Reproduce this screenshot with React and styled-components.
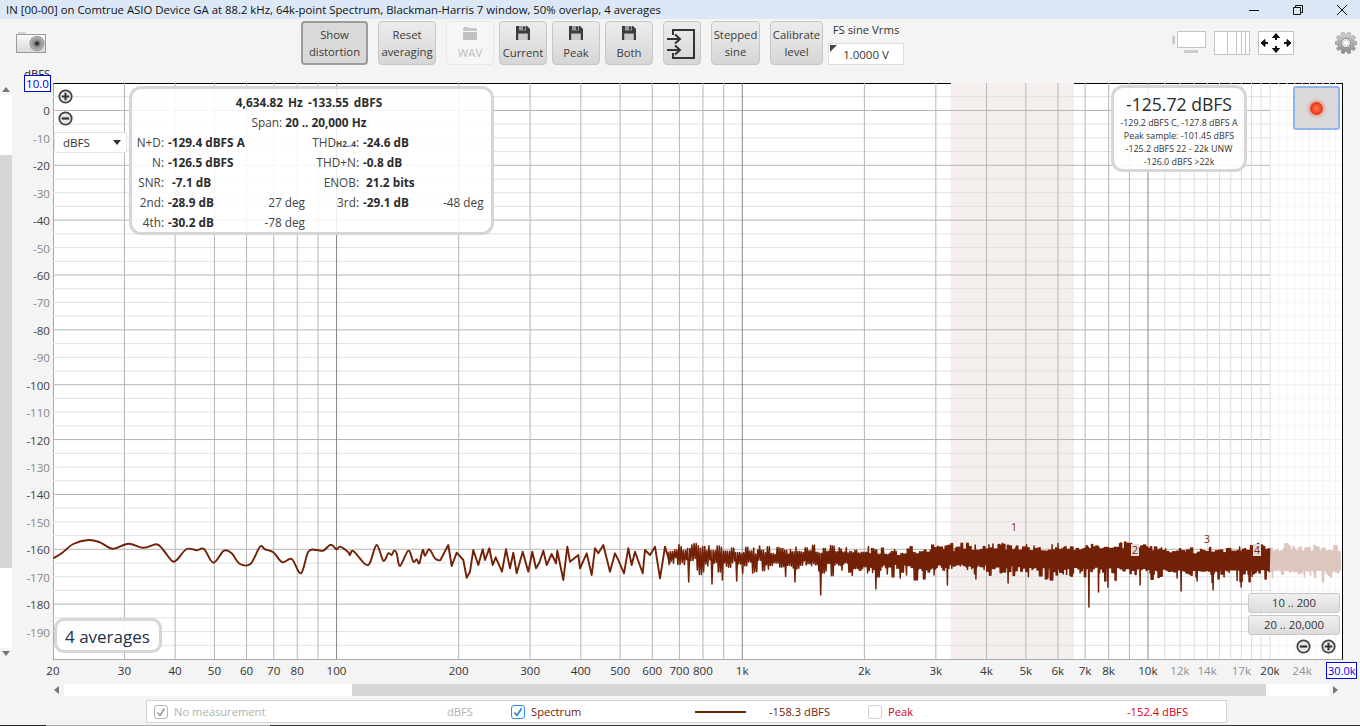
import React from "react";
import styled, { createGlobalStyle } from "styled-components";

const FONT = `"Open Sans", "Noto Sans", "Liberation Sans", sans-serif`;

const Global = createGlobalStyle`
  html, body { margin: 0; padding: 0; width: 1360px; height: 726px; overflow: hidden; background: #f4f4f4; }
  body { font-family: ${FONT}; font-size: 12px; color: #333; }
  * { box-sizing: border-box; }
`;

const Page = styled.div`
  width: 1360px; height: 726px; display: flex; flex-direction: column; overflow: hidden; background: #f4f4f4;
`;

/* ---------- title bar ---------- */
const TitleBar = styled.div`
  height: 19px; flex: none; background: #dce8f6; display: flex; align-items: center; justify-content: space-between;
  padding: 0 13px 0 6px; color: #111; font-size: 11.36px; white-space: nowrap;
`;
const WindowButtons = styled.div`display: flex; gap: 34px; align-items: center;`;
const WinIcon = styled.svg`width: 10px; height: 10px; display: block; fill: none; stroke: #111; stroke-width: 1;`;

/* ---------- toolbar ---------- */
const Toolbar = styled.div`height: 64px; flex: none; display: flex; align-items: flex-start; padding: 2px 3px 0 16px;`;
const Cam = styled.svg`width: 31px; height: 22px; margin-top: 11px; margin-right: 254px; flex: none;`;
const ToolButton = styled.div`
  width: ${p => p.$w}px; height: 44px; margin-left: ${p => p.$ml}px; flex: none; padding-top: 1px;
  border-radius: 4px; display: flex; flex-direction: column; align-items: center; justify-content: center;
  font-size: 11.3px; line-height: 16.5px; text-align: center; color: ${p => (p.$off ? "#bdbdbd" : "#3a3a3a")};
  border: 1px solid ${p => (p.$off ? "#e6e6e6" : "#c6c6c6")};
  background: ${p => (p.$off ? "#f6f6f6" : "linear-gradient(#ececec, #d6d6d6)")};
  ${p => p.$pressed && "background: #d9d9d9; border: 2px solid #9c9c9c;"}
`;
const BtnIcon = styled.svg`width: 16px; height: 16px; display: block; margin-bottom: 4px;`;
const FsBlock = styled.div`width: 76px; margin-left: 5px; flex: none; display: flex; flex-direction: column; align-items: center;`;
const FsLabel = styled.div`height: 22px; line-height: 18px; font-size: 11.3px; color: #333; white-space: nowrap;`;
const FsInput = styled.div`
  position: relative; width: 76px; height: 22px; background: #fff; border: 1px solid #ddd; line-height: 21px; text-align: center; font-size: 11.5px; color: #333;
  &::before { content: ""; position: absolute; left: 1px; top: 1px; border-style: solid; border-width: 7px 7px 0 0; border-color: #444 transparent transparent transparent; }
`;
const ViewIcon = styled.svg`width: ${p => p.$w}px; height: 26px; margin-left: ${p => p.$ml}px; margin-top: 10px; flex: none;`;
const GearIcon = styled.svg`width: 22px; height: 22px; margin-left: 41px; margin-top: 11px; flex: none;`;

/* ---------- main ---------- */
const Main = styled.div`height: 576px; flex: none; display: flex;`;
const VScroll = styled.div`width: 12px; flex: none; display: flex; flex-direction: column; align-items: center;`;
const ArrowBox = styled.div`
  flex: none; height: ${p => p.$h}px; display: flex; align-items: center; justify-content: center; width: 12px;
  &::before { content: ""; border-style: solid; border-color: transparent;
    ${p => (p.$up ? "border-width: 0 4px 5px 4px; border-bottom-color: #777;" : "border-width: 5px 4px 0 4px; border-top-color: #777;")} }
`;
const Track = styled.div`width: 12px; flex: none; height: ${p => p.$h}px; background: ${p => (p.$thumb ? "#d6d6d6" : "#fff")};`;
const YAxis = styled.div`width: 41px; flex: none; margin-top: -15px; display: flex; flex-direction: column; align-items: flex-end; padding-right: 3px; height: 591px;`;
const YUnit = styled.div`height: 7px; width: 26px; text-align: center; line-height: 12px; font-size: 11.3px; color: #222; white-space: nowrap;`;
const BlueBox = styled.div`
  background: #fff; border: 1px solid #0000e6; color: #0000e6; text-align: center; font-size: 11.6px; flex: none; white-space: nowrap;
`;
const YTop = styled(BlueBox)`width: 27px; height: 17px; line-height: 15px; margin-bottom: 5.1px; margin-right: -1px;`;
const YTick = styled.div`
  height: 27.45px; flex: none; display: flex; align-items: center; font-size: 11.6px; color: ${p => (p.$major ? "#444" : "#888")};
`;
const Plot = styled.div`
  position: relative; width: 1290px; height: 577px; flex: none; background: #fff;
  border-top: 1px solid #000; border-right: 1px solid #000; border-left: 1px solid #aaa; border-bottom: 1px solid #aaa;
`;
const ChartSvg = styled.svg`position: absolute; left: -1px; top: -1px; width: 1289px; height: 576px; display: block;`;

const Panel = styled.div`
  position: absolute; background: rgba(255,255,255,.86); border: 3px solid #d6d6d6; border-radius: 12px;
`;
const InfoPanel = styled(Panel)`
  left: 75px; top: 2px; width: 365px; height: 149px; padding: 3px 0 0 0;
  display: grid; grid-template-columns: 32px 94px 47px 54px 84px 40px; grid-auto-rows: 20px; align-items: center; font-size: 11.8px; color: #444; white-space: nowrap;
`;
const InfoHead = styled.div`grid-column: 1 / -1; text-align: center; padding-left: 3px; word-spacing: ${p => p.$ws || 0}px;`;
const B = styled.b`color: #2c2c2c; font-weight: 700;`;
const InfoLabel = styled.div`text-align: right;`;
const Sub = styled.span`font-size: 8px; font-weight: 700;`;
const InfoValue = styled.div`padding-left: ${p => p.$indent || 4}px; font-weight: 700; color: #2c2c2c;`;
const InfoPhase = styled.div`text-align: right;`;
const LevelPanel = styled(Panel)`
  left: 1057px; top: 1px; width: 136px; height: 87px; text-align: center; color: #333; font-size: 8.9px; line-height: 13px; padding-top: 4px; white-space: nowrap;
`;
const LevelBig = styled.div`font-size: 17.6px; line-height: 24px; color: #2a2a2a;`;
const RecordButton = styled.div`
  position: absolute; left: 1239px; top: 2px; width: 47px; height: 44px; background: #dadada; border: 2px solid #8fb4ea; border-radius: 3px;
  display: flex; align-items: center; justify-content: center;
`;
const RecordDot = styled.div`
  width: 13px; height: 13px; border-radius: 50%; background: radial-gradient(circle at 50% 50%, #ff7a5c, #f0401c 55%, #a82208);
  box-shadow: 0 0 3px 2px rgba(240,90,60,.4);
`;
const ZoomStack = styled.div`position: absolute; left: 4px; top: 5px; display: flex; flex-direction: column; gap: 7px;`;
const ZoomRow = styled.div`position: absolute; left: 1242px; top: 555px; display: flex; gap: 10px;`;
const ZoomIcon = styled.svg`width: 15px; height: 15px; display: block;`;
const UnitSelect = styled.div`
  position: absolute; left: 0; top: 48px; width: 73px; height: 21px; background: #fff; border: 1px solid #e2e2e2; border-radius: 2px;
  display: flex; align-items: center; justify-content: space-between; padding: 0 5px 0 8px; font-size: 11.6px; color: #333;
  &::after { content: ""; border-style: solid; border-width: 5px 4px 0 4px; border-color: #333 transparent transparent transparent; }
`;
const AvgPanel = styled(Panel)`
  left: 0; top: 534px; width: 108px; height: 35px; border-radius: 10px; font-size: 17px; line-height: 31px; padding-left: 8px; color: #22304a; white-space: nowrap;
`;
const RangeStack = styled.div`position: absolute; left: 1194px; top: 509px; display: flex; flex-direction: column; gap: 2px;`;
const RangeButton = styled.div`
  width: 92px; height: 20px; border: 1px solid #c8c8c8; border-radius: 3px; background: linear-gradient(#f0f0f0, #dcdcdc); text-align: center; line-height: 18px; font-size: 11.3px; color: #333;
`;
const Marker = styled.div`
  position: absolute; font-size: 10.5px; line-height: 12px; color: #7a2a14; padding: 0 1px;
  ${p => p.$bg && "background: #e2dcd8;"}
`;

/* ---------- x axis ---------- */
const XAxis = styled.div`height: 25px; flex: none; padding: 3px 0 0 53px; display: flex; font-size: 11.6px;`;
const XCell = styled.div`flex: none; height: 18px; line-height: 18px; white-space: nowrap;`;
const XText = styled.span`display: inline-block; transform: translateX(-50%); color: ${p => (p.$dim ? "#909090" : "#333")};`;
const XEnd = styled(BlueBox)`width: 31px; height: 17px; line-height: 15px; transform: translateX(-15px); font-size: 11px;`;

const HScroll = styled.div`height: 12px; flex: none; display: flex; align-items: center; padding-left: 54px;`;
const HArrow = styled.div`
  width: 10px; flex: none; display: flex; justify-content: ${p => (p.$left ? "flex-start" : "center")}; 
  &::before { content: ""; border-style: solid; border-color: transparent;
    ${p => (p.$left ? "border-width: 4px 5px 4px 0; border-right-color: #777;" : "border-width: 4px 0 4px 5px; border-left-color: #777;")} }
`;
const HTrack = styled.div`height: 12px; flex: none; width: ${p => p.$w}px; background: ${p => (p.$thumb ? "#d6d6d6" : "#fff")};`;

/* ---------- legend ---------- */
const Legend = styled.div`
  height: 23px; width: 1081px; flex: none; margin: 4px 0 0 146px; border: 1px solid #d2d2d2; background: #fff;
  display: flex; align-items: center; padding-left: 7px; font-size: 11.2px; white-space: nowrap;
`;
const LegendText = styled.div`width: ${p => p.$w}px; flex: none; color: ${p => p.$c}; padding-left: ${p => p.$pl || 0}px;`;
const Check = styled.div`
  width: 14px; height: 14px; flex: none; border-radius: 3px; background: #fff; margin-right: 6px;
  border: 1px solid ${p => p.$c}; display: flex; align-items: center; justify-content: center;
`;
const CheckMark = styled.svg`width: 10px; height: 10px; display: block; fill: none; stroke: ${p => p.$c}; stroke-width: 1.6;`;
const LegendLine = styled.div`width: 51px; height: 2px; flex: none; background: #722107;`;
const BottomEdge = styled.div`
  height: 1px; flex: none; margin-top: 2px; background: linear-gradient(90deg, #222 0 46px, #aaa 46px 270px, #333 270px);
`;

/* ---------- helpers ---------- */
const xOf = f => 53 + Math.log10(f / 20) * 405.7;
const yOf = db => 83 + (10 - db) * 2.7429;

function rng(seed) {
  let a = seed;
  return () => {
    a |= 0; a = (a + 0x6d2b79f5) | 0;
    let t = Math.imul(a ^ (a >>> 15), 1 | a);
    t = (t + Math.imul(t ^ (t >>> 7), 61 | t)) ^ t;
    return ((t ^ (t >>> 14)) >>> 0) / 4294967296;
  };
}

const lowA = [[160,115],[185,100],[220,72],[265,60],[300,67],[338,86],[385,71],[430,83],[470,73],[490,90],[515,122],[530,120],[560,87],[590,91],[612,87],[640,128],[672,92],[695,100],[720,132],[752,131],[780,80],[795,88],[820,97],[847,127],[875,117],[903,160],[925,95],[950,90],[970,92],[992,74],[1010,88],[1020,80],[1045,97],[1050,105],[1060,93],[1095,132],[1110,128],[1130,75],[1150,122],[1165,100],[1175,105],[1182,92],[1190,100],[1200,138],[1225,92],[1240,125],[1250,118],[1258,130],[1268,90],[1275,107],[1288,88],[1305,115],[1320,122]]
  .map(([x, y]) => [x / 3, 520 + y / 3]);
const lowB = [[355,45],[365,108],[380,68],[400,90],[410,143],[420,125],[430,60],[445,105],[458,58],[465,90],[478,55],[488,105],[497,82],[516,125],[528,58],[540,115],[550,68],[560,130],[578,65],[595,125],[607,65],[618,115],[628,98],[640,62],[650,105],[665,72],[678,100],[682,62],[700,150],[712,50],[720,95],[745,75],[750,115],[770,70],[785,135],[795,55],[805,70],[820,45],[840,125],[855,70],[865,90],[882,130],[895,55],[905,105],[915,65],[938,130],[945,60],[960,75],[975,50],[990,145],[1005,50],[1020,100]]
  .map(([x, y]) => [330 + x / 3, 530 + y / 3]);

function smooth(pts) {
  let d = `M${pts[0][0].toFixed(1)} ${pts[0][1].toFixed(1)}`;
  for (let i = 0; i < pts.length - 1; i++) {
    const p0 = pts[Math.max(0, i - 1)], p1 = pts[i], p2 = pts[i + 1], p3 = pts[Math.min(pts.length - 1, i + 2)];
    const c1 = [p1[0] + (p2[0] - p0[0]) / 6, p1[1] + (p2[1] - p0[1]) / 6];
    const c2 = [p2[0] - (p3[0] - p1[0]) / 6, p2[1] - (p3[1] - p1[1]) / 6];
    d += `C${c1[0].toFixed(1)} ${c1[1].toFixed(1)} ${c2[0].toFixed(1)} ${c2[1].toFixed(1)} ${p2[0].toFixed(1)} ${p2[1].toFixed(1)}`;
  }
  return d;
}
const poly = pts => pts.map(([x, y], i) => `${i ? "L" : "M"}${x.toFixed(1)} ${y.toFixed(1)}`).join("");

const spikes = [[688,582],[713,584],[722,580],[737,581],[795,582],[821,595],[876,589],[900,578],[948,585],[976,579],[1008,583],[1089,607],[1098,592],[1181,591],[1140,585],[1108,587],[1213,590],[1241,587]];

function band(from, to, seed, opts = {}) {
  const r = rng(seed);
  let d = "";
  let x = from;
  let up = true;
  let top = 552, bot = 562, nextTop = from, nextBot = from;
  while (x < to) {
    const t = Math.min(1, (x - 670) / 450);
    const step = opts.step || 1.1 - t * 0.6;
    const wander = Math.sin(x / 23) * 1.4 + Math.sin(x / 61) * 1.2;
    const centerTop = 552 - 2.5 * t + wander;
    const centerBot = 565 + 5 * t + wander * 0.6;
    if (x >= nextTop) {
      const q = r();
      top = centerTop - q * q * 7 + r() * 2.5;
      nextTop = x + 1 + r() * 2.5;
    }
    if (x >= nextBot) {
      const q = r();
      bot = centerBot - r() * 7 * (1.2 - t) + q * q * q * 13;
      nextBot = x + 0.8 + r() * 2;
    }
    let y = up ? top : bot;
    if (!up) {
      const sp = spikes.find(s => Math.abs(s[0] - x) <= step);
      if (sp && !opts.noSpikes) y = sp[1];
    }
    d += `${d ? "L" : "M"}${x.toFixed(1)} ${y.toFixed(1)}`;
    up = !up;
    x += step;
  }
  return d;
}

const DECADE_DARK = [100, 1000, 10000];
const MEDIUM = [30,40,50,60,70,80,90,200,300,400,500,600,700,800,900,2000,3000,4000,5000,6000,7000,8000,9000];
const LIGHT = [11,12,13,14,15,16,17,18,19,20].map(k => k * 1000);
const FAINT = [21,22,23,24,25,26,27,28,29].map(k => k * 1000);

function Chart() {
  const hLines = [];
  for (let db = 5; db >= -195; db -= 5) hLines.push(db);
  const x20k = xOf(20000);
  const lowBJoined = [lowA[lowA.length - 1], ...lowB];
  return (
    <ChartSvg viewBox="53 83 1289 576">
      <rect x="951" y="83" width="123" height="576" fill="#f4efed" />
      {hLines.map(db => {
        const major = db % 20 === 0;
        return (
          <g key={db}>
            <line x1="53" x2={x20k} y1={yOf(db)} y2={yOf(db)} stroke={major ? "#b4b4b4" : "#e0e0e0"} strokeWidth="1" />
            <line x1={x20k} x2="1342" y1={yOf(db)} y2={yOf(db)} stroke={major ? "#eeeeee" : "#f4f4f4"} strokeWidth="1" />
          </g>
        );
      })}
      {FAINT.map(f => <line key={f} x1={xOf(f)} x2={xOf(f)} y1="83" y2="659" stroke="#f3f3f3" />)}
      {LIGHT.map(f => <line key={f} x1={xOf(f)} x2={xOf(f)} y1="83" y2="659" stroke="#dcdcdc" />)}
      {MEDIUM.map(f => <line key={f} x1={xOf(f)} x2={xOf(f)} y1="83" y2="659" stroke="#b6b6b6" />)}
      {DECADE_DARK.map(f => <line key={f} x1={xOf(f)} x2={xOf(f)} y1="83" y2="659" stroke="#868686" />)}
      <path d={band(1270, 1341, 77, { step: 0.5, noSpikes: true })} fill="none" stroke="#dcc6be" strokeWidth="1.5" strokeLinejoin="round" />
      <path d={smooth(lowA)} fill="none" stroke="#722107" strokeWidth="1.9" strokeLinejoin="round" />
      <path d={poly(lowBJoined)} fill="none" stroke="#722107" strokeWidth="1.9" strokeLinejoin="round" />
      <path d={band(668, 1270, 9)} fill="none" stroke="#722107" strokeWidth="1.5" strokeLinejoin="round" />
    </ChartSvg>
  );
}

const Floppy = () => (
  <BtnIcon viewBox="0 0 16 16">
    <path d="M1 1h11l3 3v11H1z" fill="#3c3c3c" />
    <rect x="4" y="1" width="7" height="4.500" fill="#9a9a9a" />
    <rect x="8" y="1.600" width="2" height="3.200" fill="#3c3c3c" />
    <rect x="3.200" y="8.500" width="9.600" height="6.500" fill="#c9c9c9" />
  </BtnIcon>
);
const Folder = () => (
  <BtnIcon viewBox="0 0 16 16">
    <path d="M1 4l1-2h4l1 1h7l1 1v2H1z" fill="#c8c8c8" />
    <rect x="1" y="7" width="14" height="8" fill="#c2c2c2" />
  </BtnIcon>
);
const ZoomPlus = () => (
  <ZoomIcon viewBox="0 0 15 15">
    <circle cx="7.500" cy="7.500" r="6.200" fill="#e8e8e8" stroke="#444" strokeWidth="1.800" />
    <path d="M3.800 7.500h7.400M7.500 3.800v7.400" stroke="#333" strokeWidth="2" />
  </ZoomIcon>
);
const ZoomMinus = () => (
  <ZoomIcon viewBox="0 0 15 15">
    <circle cx="7.500" cy="7.500" r="6.200" fill="#e8e8e8" stroke="#444" strokeWidth="1.800" />
    <path d="M3.800 7.500h7.400" stroke="#333" strokeWidth="2.200" />
  </ZoomIcon>
);

const XT = [
  [20,"20"],[30,"30"],[40,"40"],[50,"50"],[60,"60"],[70,"70"],[80,"80"],[100,"100"],[200,"200"],[300,"300"],[400,"400"],[500,"500"],[600,"600"],[700,"700"],[800,"800"],[1000,"1k"],[2000,"2k"],[3000,"3k"],[4000,"4k"],[5000,"5k"],[6000,"6k"],[7000,"7k"],[8000,"8k"],[10000,"10k"],[12000,"12k",1],[14000,"14k",1],[17000,"17k",1],[20000,"20k"],[24000,"24k",1],
];

const gearPath = (() => {
  let d = "";
  const n = 10;
  for (let i = 0; i < n; i++) {
    const a = (i / n) * Math.PI * 2;
    const w = (Math.PI / n) * 0.55;
    const pts = [[a - w * 1.3, 8.6], [a - w * 0.8, 11], [a + w * 0.8, 11], [a + w * 1.3, 8.6]];
    pts.forEach(([t, r], j) => {
      d += `${i === 0 && j === 0 ? "M" : "L"}${(11 + r * Math.cos(t)).toFixed(2)} ${(11 + r * Math.sin(t)).toFixed(2)}`;
    });
  }
  return d + "Z";
})();

export default function App() {
  const yTicks = [];
  for (let db = 0; db >= -190; db -= 10) yTicks.push(db);
  return (
    <Page>
      <Global />
      <TitleBar>
        <span>IN [00-00] on Comtrue ASIO Device GA at 88.2 kHz, 64k-point Spectrum, Blackman-Harris 7 window, 50% overlap, 4 averages</span>
        <WindowButtons>
          <WinIcon viewBox="0 0 10 10"><path d="M0 5.500h10" /></WinIcon>
          <WinIcon viewBox="0 0 10 10"><path d="M.5 2.500h7v7h-7zM2.500 2.500v-2h7v7h-2" /></WinIcon>
          <WinIcon viewBox="0 0 10 10"><path d="M0 0l10 10M10 0L0 10" /></WinIcon>
        </WindowButtons>
      </TitleBar>

      <Toolbar>
        <Cam viewBox="0 0 31 22">
          <defs>
            <linearGradient id="camBody" x1="0" y1="0" x2="0" y2="1">
              <stop offset="0" stopColor="#fbfbfb" /><stop offset="1" stopColor="#d8d8d8" />
            </linearGradient>
            <radialGradient id="camLens">
              <stop offset="0" stopColor="#222" /><stop offset=".22" stopColor="#444" /><stop offset=".4" stopColor="#8a8a8a" /><stop offset=".85" stopColor="#b0b0b0" /><stop offset="1" stopColor="#808080" />
            </radialGradient>
          </defs>
          <rect x="2" y="0" width="8" height="3" fill="#d4d4d4" />
          <rect x=".5" y="2.500" width="29" height="18" fill="url(#camBody)" stroke="#9a9a9a" />
          <circle cx="21" cy="11.500" r="7.500" fill="url(#camLens)" />
        </Cam>
        <ToolButton $w={67} $ml={0} $pressed><span>Show</span><span>distortion</span></ToolButton>
        <ToolButton $w={58} $ml={10}><span>Reset</span><span>averaging</span></ToolButton>
        <ToolButton $w={48} $ml={10} $off><Folder />WAV</ToolButton>
        <ToolButton $w={48} $ml={5}><Floppy />Current</ToolButton>
        <ToolButton $w={48} $ml={5}><Floppy />Peak</ToolButton>
        <ToolButton $w={48} $ml={5}><Floppy />Both</ToolButton>
        <ToolButton $w={38} $ml={10}>
          <svg width="30" height="32" viewBox="0 0 30 32" fill="none" stroke="#333" strokeWidth="2">
            <path d="M6 7V2h21v28H6v-5" />
            <path d="M0 11h12M8 6.500l5 4.500-5 4.500M0 22h12M8 17.500l5 4.500-5 4.500" />
          </svg>
        </ToolButton>
        <ToolButton $w={49} $ml={10}><span>Stepped</span><span>sine</span></ToolButton>
        <ToolButton $w={53} $ml={10}><span>Calibrate</span><span>level</span></ToolButton>
        <FsBlock>
          <FsLabel>FS sine Vrms</FsLabel>
          <FsInput>1.0000 V</FsInput>
        </FsBlock>
        <ViewIcon $w={35} $ml={268} viewBox="0 0 35 26">
          <rect x="0" y="5" width="3" height="8" fill="#ccc" />
          <rect x="5.500" y=".5" width="28" height="16" fill="#fff" stroke="#c4c4c4" />
          <rect x="12" y="19" width="14" height="3" fill="#ccc" />
        </ViewIcon>
        <ViewIcon $w={36} $ml={7} viewBox="0 0 36 26">
          <rect x=".5" y=".5" width="35" height="23" fill="#fff" stroke="#c4c4c4" />
          <path d="M13.500 0v24M22.500 0v24M27.500 0v24M31.500 0v24" stroke="#c4c4c4" />
        </ViewIcon>
        <ViewIcon $w={36} $ml={8} viewBox="0 0 36 26">
          <rect x=".5" y=".5" width="35" height="23" fill="#fff" stroke="#c4c4c4" />
          <path d="M18 3v6M18 15v6M3 12h7M26 12h7" stroke="#111" strokeWidth="2" />
          <path d="M14.500 6.500L18 2.500l3.500 4zM14.500 17.500l3.500 4 3.500-4zM7 8.500L3 12l4 3.500zM29 8.500l4 3.500-4 3.500z" fill="#111" stroke="#111" />
        </ViewIcon>
        <GearIcon viewBox="0 0 22 22">
          <defs>
            <linearGradient id="gearFill" x1="0" y1="0" x2="0" y2="1">
              <stop offset="0" stopColor="#d2d2d2" /><stop offset="1" stopColor="#8a8a8a" />
            </linearGradient>
          </defs>
          <path d={gearPath} fill="url(#gearFill)" stroke="#8a8a8a" strokeWidth=".5" />
          <circle cx="11" cy="11" r="4.600" fill="#f0f0f0" stroke="#8c8c8c" />
          <circle cx="11" cy="11" r="2.800" fill="#fafafa" stroke="#bdbdbd" strokeWidth=".6" />
        </GearIcon>
      </Toolbar>

      <Main>
        <VScroll>
          <ArrowBox $up $h={12} />
          <Track $h={60} />
          <Track $h={413} $thumb />
          <Track $h={80} />
          <ArrowBox $h={11} />
        </VScroll>
        <YAxis>
          <YUnit>dBFS</YUnit>
          <YTop>10.0</YTop>
          {yTicks.map(db => <YTick key={db} $major={db % 20 === 0}>{db}</YTick>)}
        </YAxis>
        <Plot>
          <Chart />
          <InfoPanel>
            <InfoHead $ws={2}><B>4,634.82 Hz -133.55 dBFS</B></InfoHead>
            <InfoHead>Span: <B>20 .. 20,000 Hz</B></InfoHead>
            <InfoLabel>N+D:</InfoLabel><InfoValue>-129.4 dBFS A</InfoValue><div /><InfoLabel>THD<Sub>H2..4</Sub>:</InfoLabel><InfoValue>-24.6 dB</InfoValue><div />
            <InfoLabel>N:</InfoLabel><InfoValue>-126.5 dBFS</InfoValue><div /><InfoLabel>THD+N:</InfoLabel><InfoValue>-0.8 dB</InfoValue><div />
            <InfoLabel>SNR:</InfoLabel><InfoValue $indent={8}>-7.1 dB</InfoValue><div /><InfoLabel>ENOB:</InfoLabel><InfoValue $indent={7}>21.2 bits</InfoValue><div />
            <InfoLabel>2nd:</InfoLabel><InfoValue>-28.9 dB</InfoValue><InfoPhase>27 deg</InfoPhase><InfoLabel>3rd:</InfoLabel><InfoValue>-29.1 dB</InfoValue><InfoPhase>-48 deg</InfoPhase>
            <InfoLabel>4th:</InfoLabel><InfoValue>-30.2 dB</InfoValue><InfoPhase>-78 deg</InfoPhase>
          </InfoPanel>
          <LevelPanel>
            <LevelBig>-125.72 dBFS</LevelBig>
            <div>-129.2 dBFS C, -127.8 dBFS A</div>
            <div>Peak sample: -101.45 dBFS</div>
            <div>-125.2 dBFS 22 - 22k UNW</div>
            <div>-126.0 dBFS &gt;22k</div>
          </LevelPanel>
          <RecordButton><RecordDot /></RecordButton>
          <ZoomStack><ZoomPlus /><ZoomMinus /></ZoomStack>
          <UnitSelect>dBFS</UnitSelect>
          <AvgPanel>4 averages</AvgPanel>
          <Marker style={{ left: 956, top: 437 }}>1</Marker>
          <Marker $bg style={{ left: 1077, top: 460 }}>2</Marker>
          <Marker style={{ left: 1149, top: 449 }}>3</Marker>
          <Marker $bg style={{ left: 1199, top: 460 }}>4</Marker>
          <RangeStack>
            <RangeButton>10 .. 200</RangeButton>
            <RangeButton>20 .. 20,000</RangeButton>
          </RangeStack>
          <ZoomRow><ZoomMinus /><ZoomPlus /></ZoomRow>
        </Plot>
      </Main>

      <XAxis>
        {XT.map(([f, label, dim], i) => {
          const next = i + 1 < XT.length ? XT[i + 1][0] : 30000;
          return (
            <XCell key={f} style={{ width: xOf(next) - xOf(f) }}>
              <XText $dim={dim}>{label}</XText>
            </XCell>
          );
        })}
        <XEnd>30.0k</XEnd>
      </XAxis>

      <HScroll>
        <HArrow $left />
        <HTrack $w={288} />
        <HTrack $w={914} $thumb />
        <HTrack $w={64} />
        <HArrow />
      </HScroll>

      <Legend>
        <Check $c="#b4b4b4"><CheckMark $c="#9a9a9a" viewBox="0 0 10 10"><path d="M1.500 5.500l2.500 3 4.500-7" /></CheckMark></Check>
        <LegendText $w={273} $c="#b0b0b0">No measurement</LegendText>
        <LegendText $w={64} $c="#b0b0b0">dBFS</LegendText>
        <Check $c="#2a8cf0"><CheckMark $c="#1f7fe0" viewBox="0 0 10 10"><path d="M1.500 5.500l2.500 3 4.500-7" /></CheckMark></Check>
        <LegendText $w={164} $c="#7a1a08">Spectrum</LegendText>
        <LegendLine />
        <LegendText $w={122} $pl={23} $c="#7a1a08">-158.3 dBFS</LegendText>
        <Check $c="#cfcfcf" />
        <LegendText $w={239} $c="#e00020">Peak</LegendText>
        <LegendText $w={64} $c="#e00020">-152.4 dBFS</LegendText>
      </Legend>
      <BottomEdge />
    </Page>
  );
}
